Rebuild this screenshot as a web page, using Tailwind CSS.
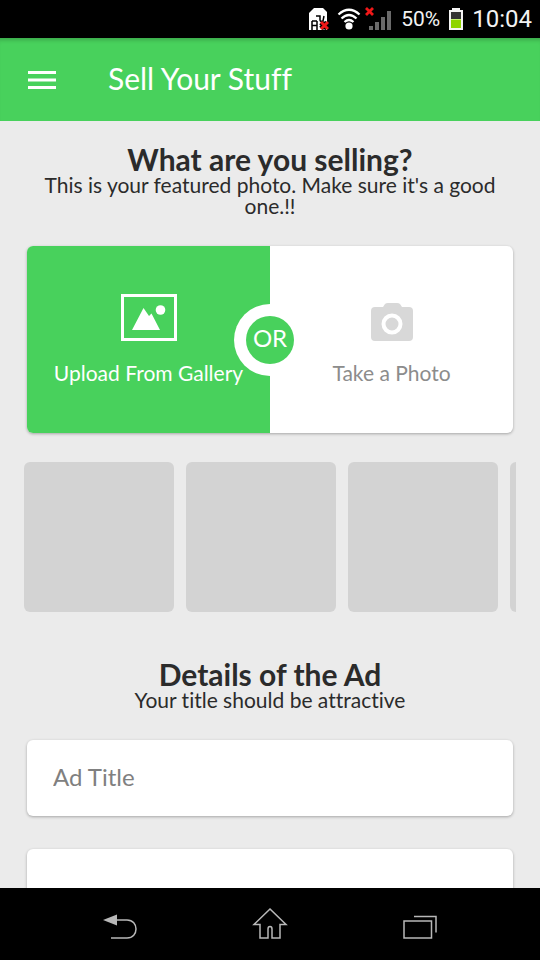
<!DOCTYPE html>
<html lang="en">
<head>
<meta charset="utf-8">
<meta name="viewport" content="width=device-width, initial-scale=1">
<title>Sell Your Stuff</title>
<script src="https://cdn.jsdelivr.net/npm/@tailwindcss/browser@4"></script>
</head>
<body class="flex h-screen flex-col overflow-hidden bg-[#ebebeb] font-[Lato,sans-serif] text-[#2b2b2b] [font-variant-ligatures:none]">

<!-- System status bar -->
<div class="flex h-[38px] shrink-0 items-center justify-end bg-black pr-2 font-[Roboto,sans-serif] text-[#f2f2f2]">
  <svg class="mr-2 h-6 w-[21px]" viewBox="0 0 21 24" role="img" aria-label="No SIM card">
    <path fill="#fff" d="M6 1h9l4 4v18H1V6z"/>
    <path fill="none" stroke="#000" stroke-width="1.500" d="M8 9h4v4q0 2 3 1l1-5M4 14h5M4 14v9M9 14v9M4 18.500h5"/>
    <path fill="none" stroke="#000" stroke-width="5" d="M13 15.500l6 6M19 15.500l-6 6"/>
    <path fill="none" stroke="#f01818" stroke-width="3" d="M13 15l7 7M20 15l-7 7"/>
  </svg>
  <svg class="mr-1 h-6 w-6" viewBox="0 0 24 24" role="img" aria-label="Wi-Fi">
    <circle cx="12" cy="19" r="3.600" fill="#fff"/>
    <path fill="none" stroke="#fff" stroke-width="2.300" d="M1.500 7.500q10.500-9.500 21 0M4.500 11.500q7.500-7 15 0M7.500 15q4.500-4 9 0"/>
  </svg>
  <svg class="mr-2 h-6 w-7" viewBox="0 0 28 24" role="img" aria-label="No signal">
    <path fill="#6a6a6a" d="M4 19h4v4H4zM10 15h4v8h-4zM16 10h4v13h-4zM22 4h4v19h-4z"/>
    <path fill="none" stroke="#f01818" stroke-width="2.800" d="M1 1l7 7M8 1L1 8"/>
  </svg>
  <span class="mr-2 text-[21px] leading-6">50%</span>
  <svg class="mr-2 h-6 w-4" viewBox="0 0 16 24" role="img" aria-label="Battery">
    <path fill="#f4f4f4" d="M4 1h8v2h3v20H1V3h3z"/>
    <path fill="#333" d="M3 5h10v7H3z"/>
    <path fill="#8fd400" d="M3 12h10v9H3z"/>
    <path stroke="#c5f56a" d="M3 12.500h10"/>
  </svg>
  <time class="text-[24px] leading-7">10:04</time>
</div>

<!-- App bar -->
<header class="flex h-[83px] shrink-0 items-center bg-[#48d15c] pl-7 text-white shadow-[inset_0_5px_4px_-3px_rgba(0,0,0,0.2)]">
  <button type="button" aria-label="Open menu" class="mr-13">
    <svg class="h-5 w-7" viewBox="0 0 28 20" fill="#fff"><path d="M0 1h28v3H0zM0 8.500h28v3H0zM0 16h28v3H0z"/></svg>
  </button>
  <h1 class="pb-1 text-[30px] leading-8">Sell Your Stuff</h1>
</header>

<main class="min-h-0 flex-1 overflow-y-auto px-[27px] pt-[23px] [scrollbar-width:none]">
  <section class="text-center">
    <h2 class="text-[30px] leading-[30px] font-bold">What are you selling?</h2>
    <p class="text-[21px] leading-[21px]">This is your featured photo. Make sure it's a good one.!!</p>
  </section>

  <div class="relative mt-[30px] grid h-[187px] grid-cols-2 rounded-md bg-white text-[21px] leading-6 shadow-[0_1px_3px_rgba(0,0,0,0.3)]">
    <button type="button" class="flex flex-col items-center rounded-l-md bg-[#48d15c] pt-12 text-white">
      <svg class="mb-5 h-[47px] w-14" viewBox="0 0 56 47" aria-hidden="true">
        <path fill="none" stroke="#fff" stroke-width="3" d="M1.500 1.500h53v44h-53z"/>
        <path fill="#fff" d="M11 36L22.500 14l5.500 8 2.500-2.500L39 36z"/>
        <circle cx="39.500" cy="16" r="4.800" fill="#fff"/>
      </svg>
      <span class="whitespace-nowrap">Upload From Gallery</span>
    </button>
    <button type="button" class="flex flex-col items-center pt-12 text-[#8c8c8c]">
      <svg class="mb-5 h-[47px] w-[42px]" viewBox="0 0 42 47" aria-hidden="true">
        <path fill="#d8d8d8" d="M4 13h8l2-3q1-1 3-1h9q2 0 3 1l2 3h7q4 0 4 4v26q0 4-4 4H4q-4 0-4-4V17q0-4 4-4z"/>
        <circle cx="21" cy="30" r="8.500" fill="#d8d8d8" stroke="#fff" stroke-width="4"/>
      </svg>
      <span>Take a Photo</span>
    </button>
    <div class="pointer-events-none absolute top-1/2 left-1/2 flex size-[72px] -translate-1/2 items-center justify-center rounded-full bg-white">
      <span class="flex size-12 items-center justify-center rounded-full bg-[#48d15c] pb-1 text-[24px] text-white">OR</span>
    </div>
  </div>

  <ul class="-mx-[3px] mt-[29px] flex gap-3 overflow-x-auto [scrollbar-width:none]" aria-label="Photos">
    <li class="size-[150px] shrink-0 rounded-md bg-[#d3d3d3]"></li>
    <li class="size-[150px] shrink-0 rounded-md bg-[#d3d3d3]"></li>
    <li class="size-[150px] shrink-0 rounded-md bg-[#d3d3d3]"></li>
    <li class="size-[150px] shrink-0 rounded-md bg-[#d3d3d3]"></li>
  </ul>

  <section class="mt-[47px] text-center">
    <h2 class="text-[30px] leading-[30px] font-bold">Details of the Ad</h2>
    <p class="text-[21px] leading-[21px]">Your title should be attractive</p>
  </section>

  <form class="mt-[30px] flex flex-col gap-[33px] pb-8">
    <input type="text" aria-label="Ad Title" placeholder="Ad Title" class="h-[76px] w-full rounded-md bg-white px-[26px] pb-1 text-[24px] shadow-[0_1px_3px_rgba(0,0,0,0.3)] placeholder:text-[#808080]">
    <textarea aria-label="Description" class="h-[76px] w-full resize-none rounded-md bg-white px-[26px] py-5 text-[24px] shadow-[0_1px_3px_rgba(0,0,0,0.3)]"></textarea>
  </form>
</main>

<!-- System navigation bar -->
<nav class="flex h-[72px] shrink-0 items-center justify-between bg-black px-[102px] pt-1" aria-label="System">
  <button type="button" aria-label="Back">
    <svg class="h-9 w-9" viewBox="0 0 36 36" fill="none" stroke="#b8b8b8" stroke-width="1.500"><path d="M14 12h11c12 0 12 18 0 18H9"/><path fill="#b8b8b8" stroke="none" d="M1 12l14-5.500v11z"/></svg>
  </button>
  <button type="button" aria-label="Home">
    <svg class="h-9 w-9" viewBox="0 0 36 36" fill="none" stroke="#b8b8b8" stroke-width="1.500"><path d="M18 1L2 16.500h6V30h8v-9q0-2.500 2-2.500t2 2.500v9h8V16.500h6z"/></svg>
  </button>
  <button type="button" aria-label="Recent apps">
    <svg class="h-9 w-9" viewBox="0 0 36 36" fill="none" stroke="#b8b8b8" stroke-width="1.500"><path d="M2 13h27.500v17H2zM12 8.500h22v16"/></svg>
  </button>
</nav>
</body>
</html>
